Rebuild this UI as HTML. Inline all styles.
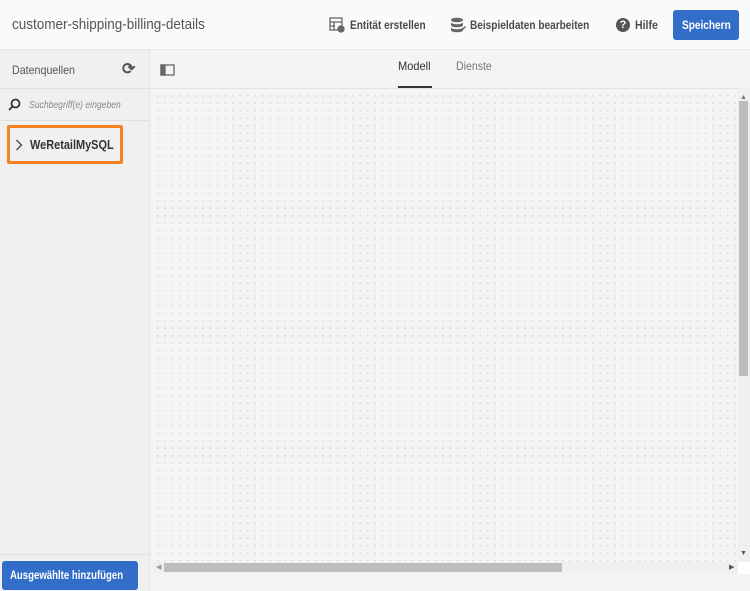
<!DOCTYPE html>
<html><head><style>
*{box-sizing:border-box;margin:0;padding:0}
body{width:750px;height:591px;overflow:hidden;background:#f4f4f4;font-family:"Liberation Sans",sans-serif;position:relative;color:#4b4b4b}
.a{position:absolute;white-space:nowrap}
.s{transform-origin:0 0}
#hdr{left:0;top:0;width:750px;height:50px;background:#fafafa;border-bottom:1px solid #e8e8e8}
#side{left:0;top:50px;width:150px;height:541px;background:#f0f0f0;border-right:1px solid #e2e2e2}
.b{font-weight:bold;font-size:12px;color:#4b4b4b}
#canvas{left:151px;top:88px;width:587px;height:474px;background-color:#f4f4f4;background-image:radial-gradient(circle,#d2d2d2 0.6px,transparent 0.8px);background-size:7.5px 7.5px;background-position:3px 3px;border-top:1px solid #e0e0e0}
</style></head><body>
<div id="hdr" class="a">
<div class="a s" style="left:12px;top:16px;font-size:15px;color:#555;transform:scaleX(.9)">customer-shipping-billing-details</div>
<svg class="a" style="left:329px;top:17px" width="16" height="16" viewBox="0 0 16 16" fill="none" stroke="#666" stroke-width="1.3"><rect x="1" y="1" width="12" height="12"/><path d="M1 5h12M5 5v8M1 9h5"/><circle cx="12" cy="12" r="3" fill="#666"/></svg>
<div class="a b s" style="left:350px;top:18px;transform:scaleX(.84)">Entität erstellen</div>
<svg class="a" style="left:450px;top:17px" width="16" height="16" viewBox="0 0 16 16" fill="#666"><ellipse cx="7" cy="3" rx="6" ry="2.3"/><path d="M1 5c0 3 12 3 12 0v3c0 3-12 3-12 0zM1 10c0 3 12 3 12 0v3c0 3-12 3-12 0z"/><path d="M10 14l5-5 1 1-5 5z"/></svg>
<div class="a b s" style="left:470px;top:18px;transform:scaleX(.84)">Beispieldaten bearbeiten</div>
<div class="a" style="left:616px;top:18px;width:14px;height:14px;border-radius:50%;background:#555;color:#fff;font-size:11px;font-weight:bold;text-align:center;line-height:14px">?</div>
<div class="a b s" style="left:635px;top:18px;transform:scaleX(.88)">Hilfe</div>
<div class="a" style="left:673px;top:10px;width:66px;height:30px;background:#326ec8;border-radius:3px"></div>
<div class="a s" style="left:682px;top:18px;color:#fff;font-size:12px;font-weight:bold;transform:scaleX(.84)">Speichern</div>
</div>
<div id="side" class="a">
<div class="a s" style="left:12px;top:13px;font-size:12px;color:#555;transform:scaleX(.89)">Datenquellen</div>
<div class="a" style="left:122px;top:9px;font-size:16px;color:#555;font-weight:bold">⟳</div>
<div class="a" style="left:0;top:38px;width:150px;height:1px;background:#e0e0e0"></div>
<svg class="a" style="left:8px;top:48px" width="13" height="13" viewBox="0 0 13 13" fill="none" stroke="#333" stroke-width="1.8"><circle cx="7.5" cy="5.5" r="4"/><path d="M4.5 8.5L1 12"/></svg>
<div class="a s" style="left:29px;top:50px;font-size:10px;font-style:italic;color:#888;transform:scaleX(.86)">Suchbegriff(e) eingeben</div>
<div class="a" style="left:0;top:70px;width:150px;height:1px;background:#e0e0e0"></div>
<div class="a" style="left:7px;top:75px;width:116px;height:39px;border:3px solid #f5821f;border-radius:2px"></div>
<svg class="a" style="left:15px;top:89px" width="8" height="12" viewBox="0 0 8 12" fill="none" stroke="#444" stroke-width="1.3"><path d="M1.5 1l5 5-5 5"/></svg>
<div class="a s" style="left:30px;top:88px;font-size:12.5px;font-weight:bold;color:#333;transform:scaleX(.875)">WeRetailMySQL</div>
<div class="a" style="left:0;top:504px;width:150px;height:1px;background:#e0e0e0"></div>
<div class="a" style="left:2px;top:511px;width:136px;height:29px;background:#326ec8;border-radius:3px"></div>
<div class="a s" style="left:10px;top:518px;color:#fff;font-size:12px;font-weight:bold;transform:scaleX(.8)">Ausgewählte hinzufügen</div>
</div>
<svg class="a" style="left:160px;top:64px" width="15" height="12" viewBox="0 0 15 12" fill="none" stroke="#666" stroke-width="1.3"><rect x="1" y="1" width="13" height="10"/><rect x="1" y="1" width="4" height="10" fill="#666"/></svg>
<div class="a s" style="left:398px;top:59px;font-size:12px;color:#333;transform:scaleX(.92)">Modell</div>
<div class="a" style="left:398px;top:86px;width:34px;height:2px;background:#333"></div>
<div class="a s" style="left:456px;top:59px;font-size:12px;color:#777;transform:scaleX(.88)">Dienste</div>
<div id="canvas" class="a"></div>
<div class="a" style="left:738px;top:88px;width:12px;height:474px;background:#f0f0f0"></div>
<div class="a" style="left:740px;top:94px;font-size:7px;color:#777">▲</div>
<div class="a" style="left:739px;top:101px;width:9px;height:275px;background:#bdbdbd"></div>
<div class="a" style="left:740px;top:550px;font-size:7px;color:#555">▼</div>
<div class="a" style="left:151px;top:562px;width:587px;height:12px;background:#f0f0f0"></div>
<div class="a" style="left:156px;top:563px;font-size:7px;color:#999">◀</div>
<div class="a" style="left:164px;top:563px;width:398px;height:9px;background:#bdbdbd"></div>
<div class="a" style="left:729px;top:563px;font-size:7px;color:#555">▶</div>
<div class="a" style="left:738px;top:562px;width:12px;height:12px;background:#fff"></div>
</body></html>
